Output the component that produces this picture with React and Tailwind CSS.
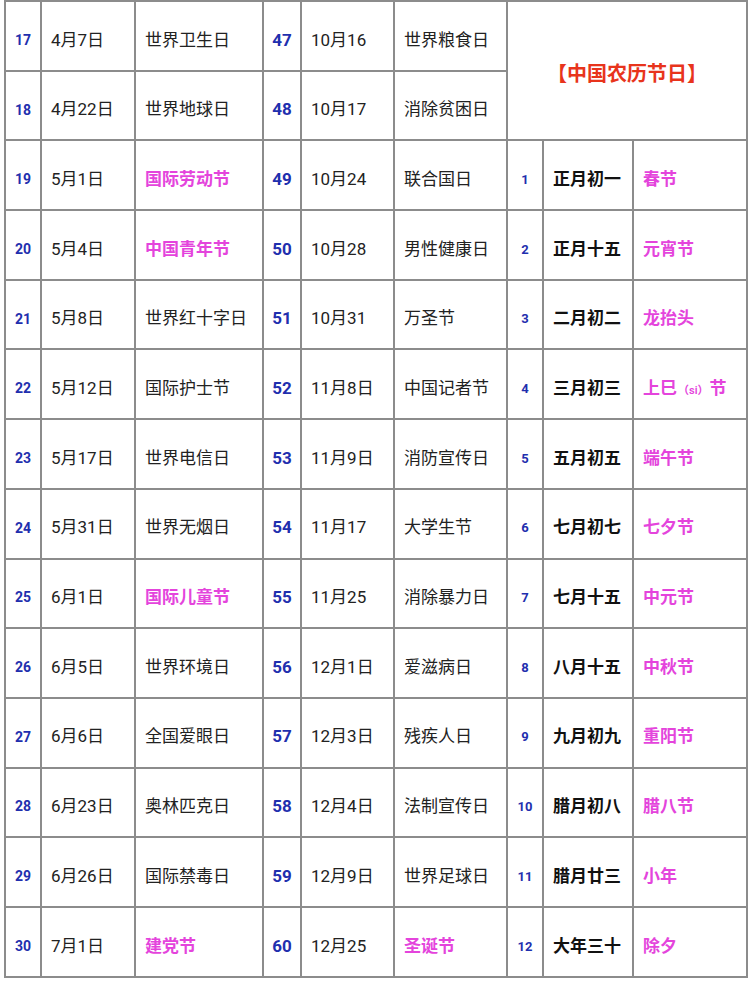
import React from "react";

const left = [
  ["17", "4月7日", "世界卫生日", false],
  ["18", "4月22日", "世界地球日", false],
  ["19", "5月1日", "国际劳动节", true],
  ["20", "5月4日", "中国青年节", true],
  ["21", "5月8日", "世界红十字日", false],
  ["22", "5月12日", "国际护士节", false],
  ["23", "5月17日", "世界电信日", false],
  ["24", "5月31日", "世界无烟日", false],
  ["25", "6月1日", "国际儿童节", true],
  ["26", "6月5日", "世界环境日", false],
  ["27", "6月6日", "全国爱眼日", false],
  ["28", "6月23日", "奥林匹克日", false],
  ["29", "6月26日", "国际禁毒日", false],
  ["30", "7月1日", "建党节", true],
];

const mid = [
  ["47", "10月16", "世界粮食日", false],
  ["48", "10月17", "消除贫困日", false],
  ["49", "10月24", "联合国日", false],
  ["50", "10月28", "男性健康日", false],
  ["51", "10月31", "万圣节", false],
  ["52", "11月8日", "中国记者节", false],
  ["53", "11月9日", "消防宣传日", false],
  ["54", "11月17", "大学生节", false],
  ["55", "11月25", "消除暴力日", false],
  ["56", "12月1日", "爱滋病日", false],
  ["57", "12月3日", "残疾人日", false],
  ["58", "12月4日", "法制宣传日", false],
  ["59", "12月9日", "世界足球日", false],
  ["60", "12月25", "圣诞节", true],
];

const lunar = [
  ["1", "正月初一", "春节"],
  ["2", "正月十五", "元宵节"],
  ["3", "二月初二", "龙抬头"],
  ["4", "三月初三", "SI"],
  ["5", "五月初五", "端午节"],
  ["6", "七月初七", "七夕节"],
  ["7", "七月十五", "中元节"],
  ["8", "八月十五", "中秋节"],
  ["9", "九月初九", "重阳节"],
  ["10", "腊月初八", "腊八节"],
  ["11", "腊月廿三", "小年"],
  ["12", "大年三十", "除夕"],
];

const cell = "border-2 border-[#8c8c8c] align-middle p-0 pt-[9px]";
const txt = "pl-[9px] text-[17px]";
const pink = "text-[#e444dc] font-semibold";

export default function App() {
  return (
    <div
      className="w-[750px] h-[988px] bg-white overflow-hidden"
      style={{ fontFamily: "Roboto, 'Noto Sans CJK SC', sans-serif" }}
    >
      <table className="ml-[4px] w-[742px] table-fixed border-collapse text-[#222]">
        <colgroup>
          <col className="w-[36px]" />
          <col className="w-[94px]" />
          <col className="w-[128px]" />
          <col className="w-[38px]" />
          <col className="w-[93px]" />
          <col className="w-[113px]" />
          <col className="w-[36px]" />
          <col className="w-[90px]" />
          <col className="w-[114px]" />
        </colgroup>
        <tbody>
          {left.map((l, i) => {
            const m = mid[i];
            const lu = i >= 2 ? lunar[i - 2] : null;
            return (
              <tr key={i} className="h-[69.7px]">
                <td className={`${cell} text-center text-[14px] font-bold text-[#1f2fae]`}>{l[0]}</td>
                <td className={`${cell} ${txt}`}>{l[1]}</td>
                <td className={`${cell} ${txt} ${l[3] ? pink : ""}`}>{l[2]}</td>
                <td className={`${cell} text-center text-[17px] font-bold text-[#1f2fae]`}>{m[0]}</td>
                <td className={`${cell} ${txt}`}>{m[1]}</td>
                <td className={`${cell} ${txt} ${m[3] ? pink : ""}`}>{m[2]}</td>
                {i === 0 && (
                  <td
                    colSpan={3}
                    rowSpan={2}
                    className="border-2 border-[#8c8c8c] align-middle p-0 pt-[6px] text-center text-[20px] font-bold text-[#e8341c]"
                  >
                    【中国农历节日】
                  </td>
                )}
                {lu && (
                  <>
                    <td className={`${cell} text-center text-[13px] font-bold text-[#1f2fae]`}>{lu[0]}</td>
                    <td className={`${cell} ${txt} font-semibold text-[#111]`}>{lu[1]}</td>
                    <td className={`${cell} ${txt} ${pink}`}>
                      {lu[2] === "SI" ? (
                        <span>
                          上巳<span className="text-[11px] mx-[1px]">（si）</span>节
                        </span>
                      ) : (
                        lu[2]
                      )}
                    </td>
                  </>
                )}
              </tr>
            );
          })}
        </tbody>
      </table>
    </div>
  );
}
